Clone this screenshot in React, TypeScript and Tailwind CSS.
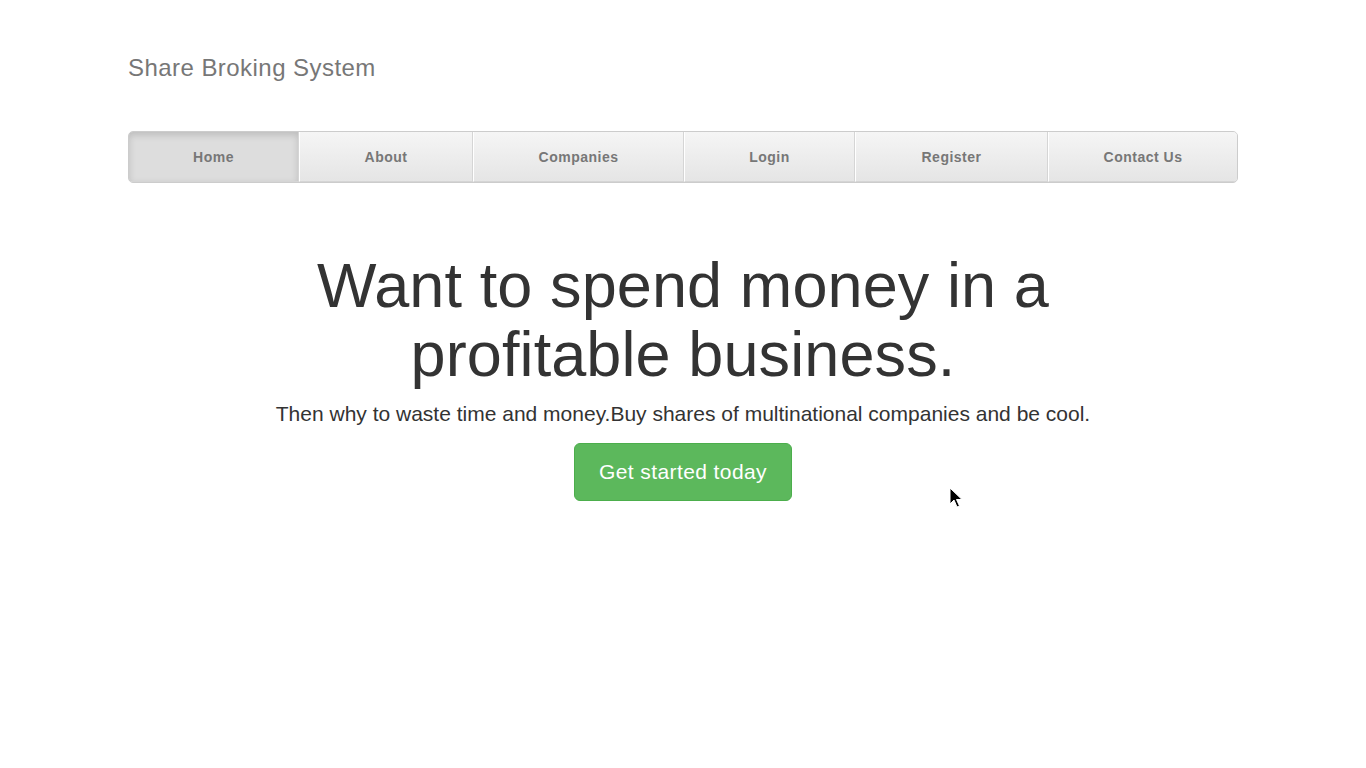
const navItems = [
  { label: 'Home', width: 'w-[170px]', active: true },
  { label: 'About', width: 'w-[174px]' },
  { label: 'Companies', width: 'w-[211px]' },
  { label: 'Login', width: 'w-[171px]' },
  { label: 'Register', width: 'w-[193px]' },
  { label: 'Contact Us', width: 'flex-1' },
]

export default function App() {
  return (
    <div className="relative min-h-screen bg-white font-['Liberation_Sans',Arial,sans-serif] text-[#333]">
      <div className="w-[1110px] mx-auto pt-[55px]">
        {/* Masthead */}
        <h3 className="text-[24px] leading-[26px] tracking-[0.45px] text-[#777]">Share Broking System</h3>

        {/* Nav */}
        <ul className="mt-[50px] flex h-[52px] bg-[#eee] border border-[#ccc] rounded-[5px] overflow-hidden">
          {navItems.map((item, i) => (
            <li key={item.label} className={item.width}>
              <a
                href="#"
                className={`flex h-full items-center justify-center pt-[2px] text-[14px] font-bold tracking-[0.5px] text-[#777] border-b border-[#d5d5d5] ${
                  i === 0 ? '' : 'border-l border-l-white'
                } ${i === navItems.length - 1 ? '' : 'border-r border-r-[#d5d5d5]'} ${
                  item.active
                    ? 'bg-[#ddd] shadow-[inset_0_3px_7px_rgba(0,0,0,0.15)]'
                    : 'bg-gradient-to-b from-[#f5f5f5] to-[#e5e5e5]'
                }`}
              >
                {item.label}
              </a>
            </li>
          ))}
        </ul>

        {/* Jumbotron */}
        <div className="px-[60px] pt-[68px] text-center">
          <h1 className="text-[63px] leading-[1.1] tracking-[0.1px] text-[#333]">Want to spend money in a profitable business.</h1>
          <p className="mt-[9px] text-[21px] leading-[30px] text-[#333]">
            Then why to waste time and money.Buy shares of multinational companies and be cool.
          </p>
          <a
            href="#"
            className="mt-[14px] inline-flex h-[58px] items-center rounded-[6px] border border-[#4cae4c] bg-[#5cb85c] px-[24px] text-[21px] tracking-[0.4px] text-white"
          >
            Get started today
          </a>
        </div>
      </div>

      {/* Mouse cursor */}
      <svg className="absolute left-[949px] top-[487px]" width="14" height="22" viewBox="0 0 14 22">
        <path d="M1 1 L1 17 L5 13 L8 20 L10.5 19 L7.5 12.5 L13 12.5 Z" fill="#000" stroke="#fff" strokeWidth="1" />
      </svg>
    </div>
  )
}
